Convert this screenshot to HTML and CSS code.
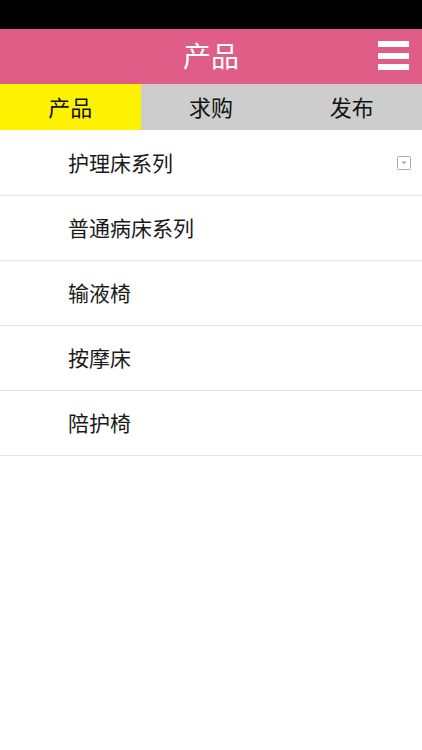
FILE: index.html
```html
<!DOCTYPE html>
<html>
<head>
  <meta charset="UTF-8">
  <title>产品</title>
  <link rel="stylesheet" href="styles.css">
</head>
<body>
  <div class="status-bar"></div>
  <div class="header">
    <span class="title">产品</span>
    <span class="menu-btn">
      <span class="bar"></span>
      <span class="bar"></span>
      <span class="bar"></span>
    </span>
  </div>
  <div class="tabs">
    <div class="tab active">产品</div>
    <div class="tab">求购</div>
    <div class="tab">发布</div>
  </div>
  <ul class="list">
    <li class="item">护理床系列
      <svg class="drop" width="14" height="14" viewBox="0 0 14 14">
        <rect x="0.5" y="0.5" width="13" height="13" rx="1" fill="#fff" stroke="#aaa"/>
        <path d="M4.5 5.5h5l-2.5 2.5z" fill="#999"/>
      </svg>
    </li>
    <li class="item">普通病床系列</li>
    <li class="item">输液椅</li>
    <li class="item">按摩床</li>
    <li class="item">陪护椅</li>
  </ul>
</body>
</html>
```

FILE: styles.css
```css
body {
  margin: 0;
  background: #fff;
  font-family: "Noto Sans CJK SC", "Noto Sans", sans-serif;
}
.status-bar {
  height: 29px;
  background: #000;
}
.header {
  position: relative;
  height: 55px;
  box-sizing: border-box;
  padding-bottom: 3px;
  background: #df5d87;
  display: flex;
  align-items: center;
  justify-content: center;
}
.title {
  color: #fff;
  font-size: 28px;
  line-height: 1;
}
.menu-btn {
  position: absolute;
  right: 13px;
  top: 12px;
  width: 31px;
  display: flex;
  flex-direction: column;
  gap: 5.5px;
}
.bar {
  display: block;
  height: 6px;
  background: #fff;
}
.tabs {
  display: flex;
  height: 46px;
  background: #cdcdcd;
}
.tab {
  flex: 1;
  display: flex;
  align-items: center;
  justify-content: center;
  padding-bottom: 3px;
  font-size: 22px;
  color: #111;
}
.tab.active {
  background: #fff200;
}
.list {
  list-style: none;
  margin: 1px 0 0;
  padding: 0;
}
.item {
  position: relative;
  height: 64px;
  box-sizing: border-box;
  height: 65px;
  padding-bottom: 3px;
  border-bottom: 1px solid #e3e3e3;
  display: flex;
  align-items: center;
  padding-left: 68px;
  font-size: 21px;
  color: #1a1a1a;
}
.drop {
  position: absolute;
  right: 11px;
  top: 25px;
}
```
